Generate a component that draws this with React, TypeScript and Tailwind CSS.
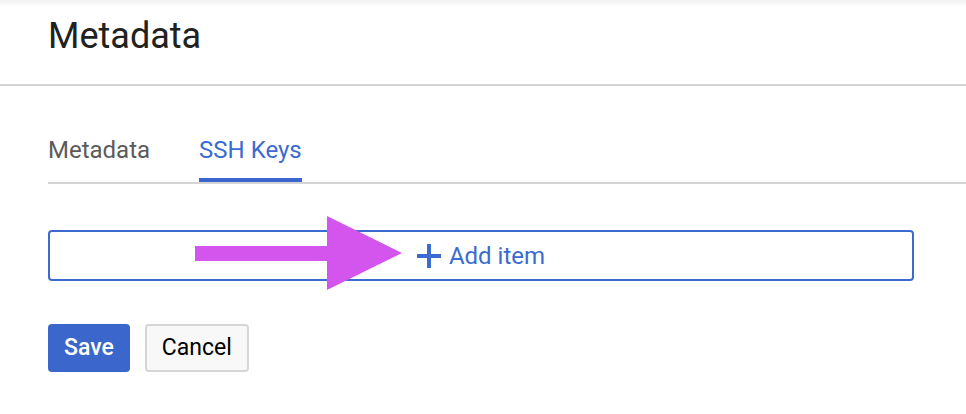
const tabs = [
  { label: "Metadata", active: false },
  { label: "SSH Keys", active: true },
];

const AnnotationArrow = () => (
  <svg
    className="absolute left-0 top-0 pointer-events-none"
    width="966"
    height="414"
    viewBox="0 0 966 414"
  >
    <rect x="195" y="246" width="135" height="15" fill="#d454ee" />
    <polygon points="327,216 402,253 327,290" fill="#d454ee" />
  </svg>
);

const App = () => {
  return (
    <div className="relative w-[966px] h-[414px] overflow-hidden bg-white font-['Roboto',sans-serif]">
      {/* top edge shadow */}
      <div className="absolute left-0 top-0 w-full h-[7px] bg-gradient-to-b from-[#f1f1f1] to-white" />

      {/* header */}
      <div className="relative h-[86px] border-b-2 border-[#d4d4d4] pl-12 pt-[15px]">
        <h1 className="text-[36px] leading-[42px] text-[#212121]">Metadata</h1>
      </div>

      <div className="pl-12">
        {/* tabs */}
        <div className="mt-[50px] flex gap-[49px] border-b-2 border-[#d4d4d4]">
          {tabs.map((t) => (
            <div key={t.label} className="flex flex-col">
              <span
                className={`text-[24px] leading-[28px] pb-[14px] ${
                  t.active ? "text-[#3b6bd1]" : "text-[#5b5b5b]"
                }`}
              >
                {t.label}
              </span>
              <div className={`h-[4px] ${t.active ? "bg-[#3b66d0]" : "bg-transparent"}`} />
            </div>
          ))}
        </div>

        {/* add item */}
        <button className="mt-[46px] w-[866px] h-[51px] flex items-center justify-center gap-2 rounded-[4px] border-2 border-[#3b6bd1] text-[#3b6bd1]">
          <svg width="24" height="24" viewBox="0 0 24 24">
            <rect x="10" y="0" width="4" height="24" fill="#3b6bd1" />
            <rect x="0" y="10" width="24" height="4" fill="#3b6bd1" />
          </svg>
          <span className="text-[24px] leading-[28px]">Add item</span>
        </button>

        {/* actions */}
        <div className="mt-[43px] flex gap-[15px]">
          <button className="h-[48px] px-4 rounded-[4px] bg-[#3b66cc] text-white text-[23px] font-medium">
            Save
          </button>
          <button className="h-[48px] px-[15px] rounded-[4px] border-2 border-[#d6d6d6] bg-[#f8f8f8] text-black text-[23px]">
            Cancel
          </button>
        </div>
      </div>

      <AnnotationArrow />
    </div>
  );
};

export default App;
